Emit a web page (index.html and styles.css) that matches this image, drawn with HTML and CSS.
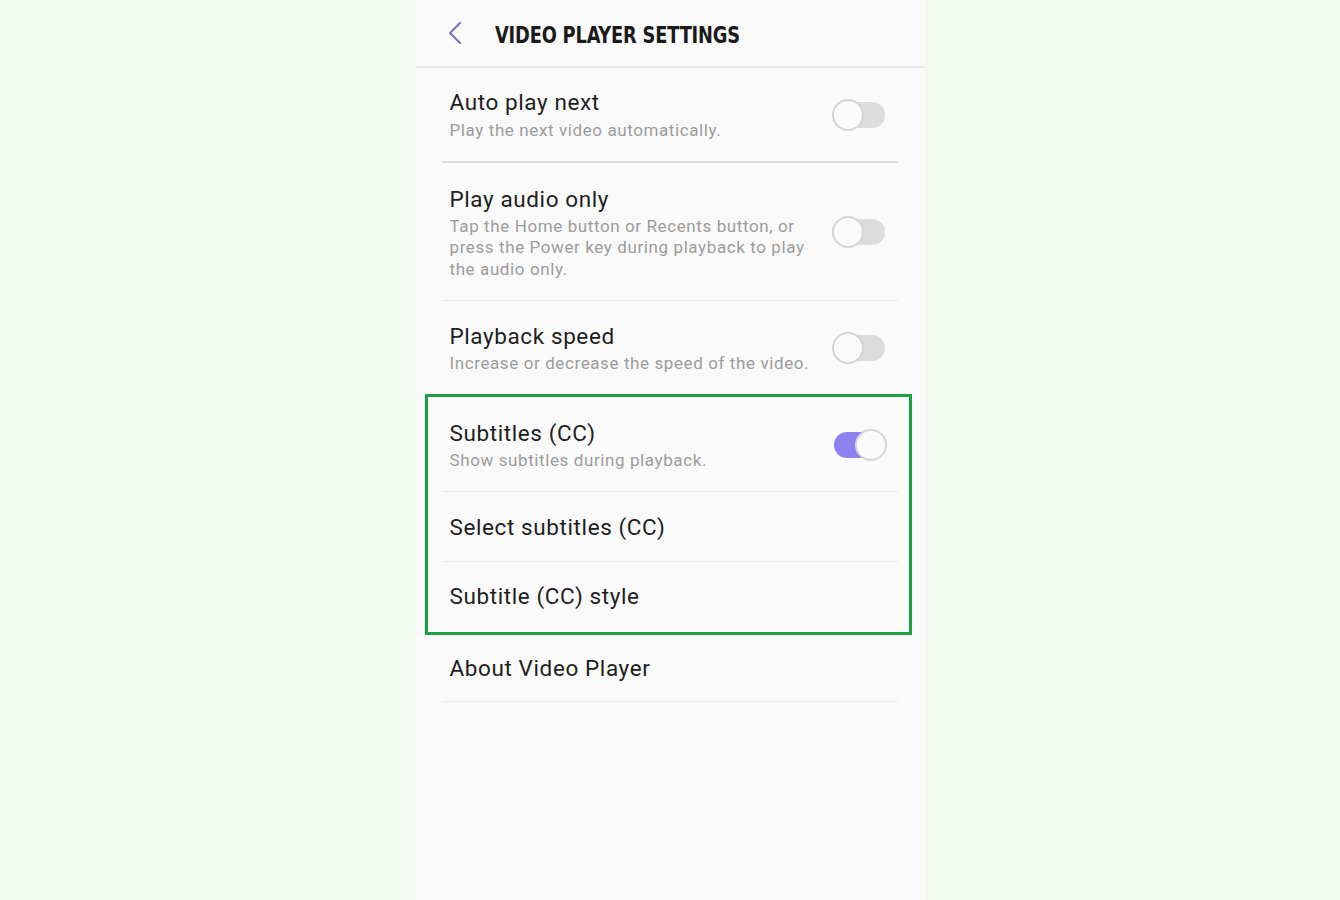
FILE: index.html
```html
<!DOCTYPE html>
<html>
<head>
<meta charset="utf-8">
<link rel="stylesheet" href="styles.css">
</head>
<body>
<div class="panel">
  <header class="topbar">
    <svg class="back" width="16" height="24" viewBox="0 0 16 24"><path d="M13 2 L3 12 L13 22" fill="none" stroke="#7d72c4" stroke-width="2.2" stroke-linecap="round" stroke-linejoin="round"/></svg>
    <h1 class="title">VIDEO PLAYER SETTINGS</h1>
  </header>
  <div class="list">
    <div class="row r1 strong">
      <div class="text">
        <div class="name">Auto play next</div>
        <div class="desc">Play the next video automatically.</div>
      </div>
      <span class="toggle"></span>
    </div>
    <div class="row r2">
      <div class="text">
        <div class="name">Play audio only</div>
        <div class="desc">Tap the Home button or Recents button, or press the Power key during playback to play the audio only.</div>
      </div>
      <span class="toggle"></span>
    </div>
    <div class="row r3 nodiv">
      <div class="text">
        <div class="name">Playback speed</div>
        <div class="desc">Increase or decrease the speed of the video.</div>
      </div>
      <span class="toggle"></span>
    </div>
    <div class="row r4">
      <div class="text">
        <div class="name">Subtitles (CC)</div>
        <div class="desc">Show subtitles during playback.</div>
      </div>
      <span class="toggle on"></span>
    </div>
    <div class="row r5">
      <div class="text"><div class="name">Select subtitles (CC)</div></div>
    </div>
    <div class="row r6 nodiv">
      <div class="text"><div class="name">Subtitle (CC) style</div></div>
    </div>
    <div class="row r7">
      <div class="text"><div class="name">About Video Player</div></div>
    </div>
  </div>
  <div class="highlight"></div>
</div>
</body>
</html>
```
FILE: styles.css
```css
html, body {
  margin: 0;
  padding: 0;
  background: #f2f9ee;
  height: 900px;
  overflow: hidden;
}
.panel {
  position: relative;
  width: 509px;
  height: 900px;
  margin: 0 auto;
  background: #fafafa;
  font-family: Roboto, "Noto Sans", sans-serif;
  color: #1e1e1e;
}
.topbar {
  height: 66px;
  border-bottom: 2px solid #e9e9ea;
  display: flex;
  align-items: center;
  box-sizing: content-box;
}
.back {
  margin-left: 31px;
  margin-top: 0;
}
.title {
  margin: 3px 0 0 32px;
  font-family: "DejaVu Sans Condensed", "Roboto", sans-serif;
  font-weight: bold;
  font-size: 23px;
  letter-spacing: -0.2px;
  color: #1a1a1a;
  white-space: nowrap;
  transform: scaleX(0.86);
  transform-origin: left center;
}
.list {
  display: flex;
  flex-direction: column;
}
.row {
  position: relative;
  display: flex;
  align-items: center;
  padding: 0 40px 0 34px;
}
.row::after {
  content: "";
  position: absolute;
  left: 26px;
  right: 27px;
  bottom: 0;
  height: 1px;
  background: #ececec;
}
.row.strong::after {
  height: 2px;
  background: #dcdcdc;
}
.row.nodiv::after { display: none; }
.text {
  flex: 1;
  min-width: 0;
}
.name {
  font-size: 22.5px;
  line-height: 28px;
  letter-spacing: 0.6px;
  color: #1e1e1e;
}
.desc {
  margin-top: 3px;
  font-size: 17px;
  line-height: 21.5px;
  letter-spacing: 0.6px;
  color: #9c9c9c;
}
.r1 { padding-top: 20px; padding-bottom: 21px; }
.r1 .desc { margin-top: 4px; }
.r2 { padding-top: 22px; padding-bottom: 21px; }
.r3 { padding-top: 21px; padding-bottom: 19px; }
.r4 { padding-top: 25px; padding-bottom: 21px; }
.r5 { padding-top: 21px; padding-bottom: 21px; }
.r6 { padding-top: 20px; padding-bottom: 23px; }
.r7 { padding-top: 21px; padding-bottom: 20px; }
.toggle {
  position: relative;
  flex: none;
  width: 53px;
  height: 32px;
  margin-left: 14px;
}
.toggle::before {
  content: "";
  position: absolute;
  left: 2px;
  right: 0;
  top: 3px;
  height: 26px;
  border-radius: 13px;
  background: #dcdcdc;
}
.toggle::after {
  content: "";
  position: absolute;
  left: 0;
  top: 0;
  width: 28px;
  height: 28px;
  border-radius: 50%;
  background: #fbfbfb;
  border: 2px solid #d4d4d4;
}
.toggle.on::before {
  background: #8d80ef;
}
.toggle.on::after {
  left: auto;
  right: -2px;
  border-color: #d6d6d6;
}
.highlight {
  position: absolute;
  left: 9px;
  top: 394px;
  width: 481px;
  height: 235px;
  border: 3px solid #1fa040;
  pointer-events: none;
}
```
